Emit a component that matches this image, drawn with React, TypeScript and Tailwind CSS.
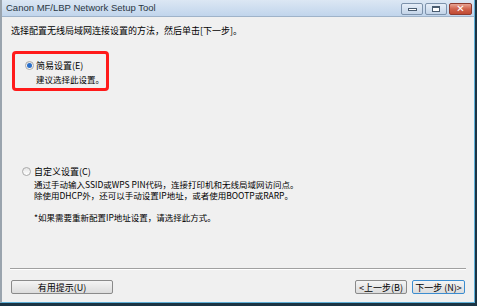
import React from "react";

const cjk = { fontFamily: '"Noto Sans CJK SC", "Noto Sans", sans-serif' };

function Radio({ checked }: { checked?: boolean }) {
  return (
    <span className="w-[9px] h-[9px] rounded-full border border-[#a9a9a9] bg-gradient-to-b from-[#e6e6e6] to-[#ffffff] flex items-center justify-center flex-shrink-0">
      {checked && <span className="w-[5px] h-[5px] rounded-full bg-[#2a6fc9]" />}
    </span>
  );
}

function WinButton({ children, close }: { children: React.ReactNode; close?: boolean }) {
  return (
    <div
      className={`h-[12px] flex items-center justify-center rounded-[2px] border ${
        close
          ? "w-[23px] border-[#8c3a2e] bg-gradient-to-b from-[#e8a393] via-[#d0624c] to-[#c04a33]"
          : "w-[22px] border-[#7d92ab] bg-gradient-to-b from-[#e6eef8] to-[#c3d4e8]"
      }`}
    >
      {children}
    </div>
  );
}

function Btn({ children, focused, className = "" }: { children: React.ReactNode; focused?: boolean; className?: string }) {
  return (
    <div
      className={`h-[14px] flex items-center justify-center rounded-[2px] border text-[9px] leading-none text-black whitespace-nowrap bg-gradient-to-b from-[#f4f4f4] to-[#dcdcdc] ${
        focused ? "border-[#3c8dd0]" : "border-[#8a8a8a]"
      } ${className}`}
      style={cjk}
    >
      {children}
    </div>
  );
}

export default function App() {
  return (
    <div className="w-[477px] h-[306px] bg-[#1b3444] flex flex-col overflow-hidden">
      <div className="flex-1 flex flex-col mr-[2px] mb-[3px] border-l-2 border-[#9aa4ae] border-r border-b border-r-[#5fb0d8] border-b-[#5fb0d8]">
        {/* Title bar */}
        <div className="h-[17px] flex items-start justify-between bg-gradient-to-b from-[#dce7f4] to-[#c1d5ec] border-b border-[#9fb3c9]">
          <span
            className="pl-[4px] pt-[3px] text-[9.5px] leading-none text-[#2a3642]"
            style={{ fontFamily: '"Liberation Sans", Arial, sans-serif' }}
          >
            Canon MF/LBP Network Setup Tool
          </span>
          <div className="flex gap-[2px] pt-[3px] pr-[2px]">
            <WinButton>
              <span className="w-[9px] h-[3px] bg-white border border-[#4a5c70]" />
            </WinButton>
            <WinButton>
              <span className="w-[8px] h-[6px] bg-white border border-[#4a5c70] border-t-2" />
            </WinButton>
            <WinButton close>
              <span className="text-white text-[10px] leading-none font-bold" style={{ fontFamily: '"DejaVu Sans", sans-serif' }}>
                ✕
              </span>
            </WinButton>
          </div>
        </div>

        {/* Content */}
        <div className="flex-1 flex flex-col bg-[#f0f0f0] text-black" style={cjk}>
          <p className="pl-[9px] pt-[8px] text-[9px] leading-[11px] whitespace-nowrap">
            选择配置无线局域网连接设置的方法，然后单击[下一步]。
          </p>

          <div className="ml-[10px] mt-[15px] w-[97px] h-[40px] border-[3px] border-[#ff1a1a] rounded-[4px] pl-[10px] pt-[6px] whitespace-nowrap">
            <div className="flex items-center gap-[2px] text-[9px] leading-[11px]">
              <Radio checked />
              <span>简易设置(E)</span>
            </div>
            <p className="pl-[11px] mt-[3px] text-[8.5px] leading-[11px]">建议选择此设置。</p>
          </div>

          <div className="ml-[20px] mt-[75px] text-[9px] whitespace-nowrap">
            <div className="flex items-center gap-[3px] leading-[11px]">
              <Radio />
              <span>自定义设置(C)</span>
            </div>
            <div className="pl-[12px] mt-[2px] leading-[11px] text-[8.5px]">
              <p>通过手动输入SSID或WPS PIN代码，连接打印机和无线局域网访问点。</p>
              <p>除使用DHCP外，还可以手动设置IP地址，或者使用BOOTP或RARP。</p>
              <p className="mt-[11px]">*如果需要重新配置IP地址设置，请选择此方式。</p>
            </div>
          </div>

          <div className="mt-auto mx-[8px] border-t border-[#a0a0a0] border-b border-b-white" />
          <div className="flex items-center justify-between pl-[9px] pr-[9px] pt-[10px] pb-[8px]">
            <Btn className="w-[102px]">有用提示(U)</Btn>
            <div className="flex gap-[5px]">
              <Btn className="w-[52px]">&lt;上一步(B)</Btn>
              <Btn className="w-[53px]" focused>
                下一步 (N)&gt;
              </Btn>
            </div>
          </div>
        </div>
      </div>
    </div>
  );
}
